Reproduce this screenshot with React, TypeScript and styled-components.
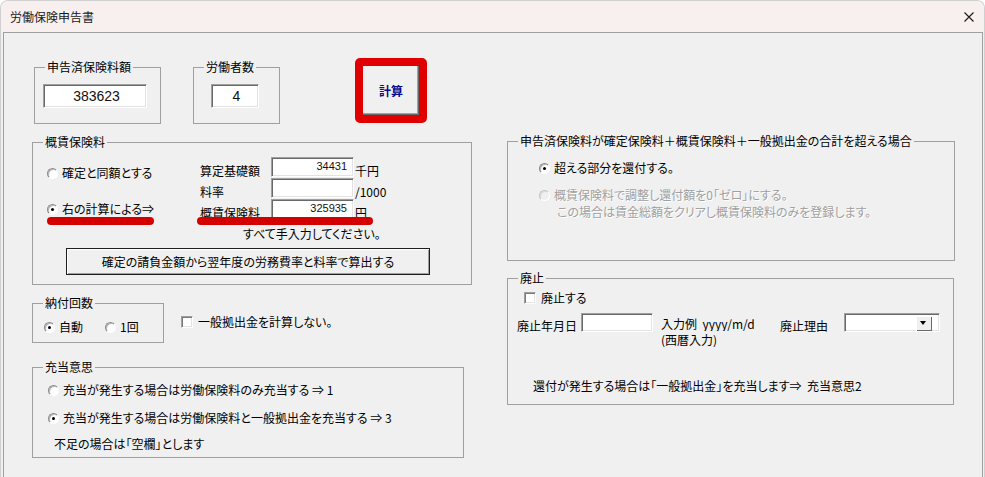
import type { ReactNode } from 'react'
import styled, { createGlobalStyle } from 'styled-components'

const ui = `"Noto Sans CJK JP", "Noto Sans", sans-serif`

const Option = ({ checked, disabled, children }: { checked?: boolean; disabled?: boolean; children: ReactNode }) => (
   <OptionRow $disabled={disabled}>
      <RadioMark $checked={checked} $disabled={disabled} />
      <span>{children}</span>
   </OptionRow>
)

const Check = ({ children }: { children: ReactNode }) => (
   <CheckRow>
      <CheckMark />
      <span>{children}</span>
   </CheckRow>
)

const App = () => {
   return (
      <>
         <GlobalStyle />
         <Window>
            <TitleBar>
               <Title>労働保険申告書</Title>
               <svg width='10' height='10' viewBox='0 0 10 10'>
                  <path d='M0.5 0.5 L9.5 9.5 M9.5 0.5 L0.5 9.5' stroke='#1a1a1a' strokeWidth='1.1' />
               </svg>
            </TitleBar>

            <Client>
               <TopRow>
                  <Frame $w={127} $h={64} $mt={2}>
                     <Legend>申告済保険料額</Legend>
                     <TextBox $w={104} $h={24} $big $mt={10} $ml={8}>383623</TextBox>
                  </Frame>
                  <Frame $w={87} $h={64} $mt={2} $ml={32}>
                     <Legend>労働者数</Legend>
                     <TextBox $w={48} $h={24} $big $mt={10} $ml={17}>4</TextBox>
                  </Frame>
                  <CalcMark>
                     <CalcButton>計算</CalcButton>
                  </CalcMark>
               </TopRow>

               <Columns>
                  <Column>
                     <Frame $w={440} $h={150} $mt={1}>
                        <Legend>概賃保険料</Legend>
                        <EstimateBody>
                           <RadioStack $left={14} $top={17} $gap={22}>
                              <Option>確定と同額とする</Option>
                              <Option checked>右の計算による⇒</Option>
                           </RadioStack>
                           <FieldGrid>
                              <FieldLabel>算定基礎額</FieldLabel>
                              <TextBox $w={83} $h={20}>34431</TextBox>
                              <FieldLabel $unit>千円</FieldLabel>
                              <FieldLabel>料率</FieldLabel>
                              <TextBox $w={83} $h={20} />
                              <FieldLabel $unit>/1000</FieldLabel>
                              <FieldLabel>概賃保険料</FieldLabel>
                              <TextBox $w={83} $h={20}>325935</TextBox>
                              <FieldLabel $unit>円</FieldLabel>
                           </FieldGrid>
                           <Highlight $left={14} $width={107} />
                           <Highlight $left={164} $width={176} />
                        </EstimateBody>
                        <Note $ml={210} $mt={7}>すべて手入力してください。</Note>
                        <WideButton>確定の請負金額から翌年度の労務費率と料率で算出する</WideButton>
                     </Frame>

                     <PayRow>
                        <Frame $w={132} $h={47}>
                           <Legend>納付回数</Legend>
                           <InlineOptions>
                              <Option checked>自動</Option>
                              <Option>1回</Option>
                           </InlineOptions>
                        </Frame>
                        <CheckSlot>
                           <Check>一般拠出金を計算しない。</Check>
                        </CheckSlot>
                     </PayRow>

                     <Frame $w={432} $h={98} $mt={17}>
                        <Legend>充当意思</Legend>
                        <RadioStack $left={15} $top={9} $gap={14}>
                           <Option>充当が発生する場合は労働保険料のみ充当する ⇒ 1</Option>
                           <Option checked>充当が発生する場合は労働保険料と一般拠出金を充当する ⇒ 3</Option>
                        </RadioStack>
                        <Note $ml={21} $mt={12}>不足の場合は「空欄」とします</Note>
                     </Frame>
                  </Column>

                  <Column>
                     <Frame $w={448} $h={127}>
                        <Legend>申告済保険料が確定保険料＋概賃保険料＋一般拠出金の合計を超える場合</Legend>
                        <RadioStack $left={31} $top={13} $gap={13}>
                           <Option checked>超える部分を還付する。</Option>
                           <Option disabled>概賃保険料で調整し還付額を0「ゼロ」にする。</Option>
                        </RadioStack>
                        <Note $ml={49} $mt={3} $disabled>この場合は賃金総額をクリアし概賃保険料のみを登録します。</Note>
                     </Frame>

                     <Frame $w={447} $h={134} $mt={10}>
                        <Legend>廃止</Legend>
                        <AbolishCheck>
                           <Check>廃止する</Check>
                        </AbolishCheck>
                        <DateRow>
                           <RowLabel>廃止年月日</RowLabel>
                           <TextBox $w={72} $h={19} />
                           <Example>
                              <ExampleLine>入力例&nbsp;&nbsp;yyyy/m/d</ExampleLine>
                              <ExampleLine>(西暦入力)</ExampleLine>
                           </Example>
                           <RowLabel>廃止理由</RowLabel>
                           <TextBox $w={96} $h={19} $combo>
                              <DropButton />
                           </TextBox>
                        </DateRow>
                        <Note $ml={25} $mt={32}>還付が発生する場合は「一般拠出金」を充当します⇒&nbsp;&nbsp;充当意思2</Note>
                     </Frame>
                  </Column>
               </Columns>
            </Client>
         </Window>
      </>
   )
}

const GlobalStyle = createGlobalStyle`
   html, body {
      margin: 0;
      background: #ffffff;
   }

   body {
      font-family: ${ui};
      font-size: 12px;
      font-feature-settings: 'palt';
      color: #000;
   }
`

const Window = styled.div`
   width: 985px;
   height: 477px;
   box-sizing: border-box;
   border: 1px solid #cfcfcf;
   border-bottom: none;
   border-radius: 8px 8px 0 0;
   background: #f0f0f0;
   overflow: hidden;
   display: flex;
   flex-direction: column;
`

const TitleBar = styled.header`
   height: 31px;
   flex-shrink: 0;
   display: flex;
   align-items: center;
   justify-content: space-between;
   padding: 0 10px 0 9px;
   background: #f8f0ef;
`

const Title = styled.span`
   font-size: 12px;
   line-height: 14px;
   color: #1a1a1a;
`

const Client = styled.main`
   flex: 1;
   margin: 0 1px 0 2px;
   border: 1px solid #a0a0a0;
   border-bottom: none;
   background: #f0f0f0;
`

const TopRow = styled.section`
   display: flex;
   align-items: flex-start;
   padding: 25px 0 0 30px;
`

const Frame = styled.fieldset<{ $w: number; $h: number; $mt?: number; $ml?: number }>`
   box-sizing: border-box;
   width: ${p => p.$w}px;
   height: ${p => p.$h}px;
   min-width: 0;
   margin: ${p => p.$mt ?? 0}px 0 0 ${p => p.$ml ?? 0}px;
   padding: 0;
   border: 1px solid #a0a0a0;
`

const Legend = styled.legend`
   margin-left: 10px;
   padding: 0 2px;
   height: 14px;
   line-height: 14px;
   font-size: 12px;
   white-space: nowrap;
`

const TextBox = styled.div<{
   $w: number
   $h: number
   $big?: boolean
   $combo?: boolean
   $mt?: number
   $ml?: number
}>`
   box-sizing: border-box;
   width: ${p => p.$w}px;
   height: ${p => p.$h}px;
   margin: ${p => p.$mt ?? 0}px 0 0 ${p => p.$ml ?? 0}px;
   background: #ffffff;
   border-top: 1px solid #a0a0a0;
   border-left: 1px solid #a0a0a0;
   border-right: 1px solid #ffffff;
   border-bottom: 1px solid #ffffff;
   box-shadow: inset 1px 1px 0 #696969, inset -1px -1px 0 #e3e3e3;
   font-family: 'Liberation Sans', Arial, sans-serif;
   font-size: ${p => (p.$big ? 14 : 11)}px;
   line-height: ${p => (p.$big ? p.$h - 2 : 14)}px;
   text-align: ${p => (p.$big ? 'center' : 'right')};
   padding: ${p => (p.$big ? '0 0 0 3px' : '1px 6px 0 0')};
   color: #111;
   display: ${p => (p.$combo ? 'flex' : 'block')};
   justify-content: flex-end;
   align-items: center;
`

const DropButton = styled.span`
   position: relative;
   box-sizing: border-box;
   width: 16px;
   height: 15px;
   margin-right: 1px;
   background: #f0f0f0;
   box-shadow: inset 1px 1px 0 #ffffff, inset -1px -1px 0 #696969;

   &::after {
      content: '';
      position: absolute;
      left: 4px;
      top: 5px;
      border-left: 3.5px solid transparent;
      border-right: 3.5px solid transparent;
      border-top: 4px solid #000;
   }
`

const CalcMark = styled.div`
   box-sizing: border-box;
   width: 72px;
   height: 65px;
   margin-left: 75px;
   border: 8px solid #e10000;
   border-radius: 5px;
`

const CalcButton = styled.button`
   width: 100%;
   height: 100%;
   padding: 0;
   border: none;
   background: #f0f0f0;
   box-shadow: inset -1px -1px 0 #696969, inset -2px -2px 0 #a0a0a0;
   font-family: ${ui};
   font-size: 12px;
   font-weight: 700;
   color: #0a0a8c;
`

const Columns = styled.section`
   display: grid;
   grid-template-columns: 440px 448px;
   column-gap: 35px;
   align-items: start;
   padding-left: 28px;
   margin-top: 10px;
`

const Column = styled.div`
   display: flex;
   flex-direction: column;
`

const EstimateBody = styled.div`
   position: relative;
   display: grid;
   grid-template-columns: 167px auto;
`

const RadioStack = styled.div<{ $left: number; $top: number; $gap: number }>`
   display: flex;
   flex-direction: column;
   gap: ${p => p.$gap}px;
   padding: ${p => p.$top}px 0 0 ${p => p.$left}px;
`

const OptionRow = styled.div<{ $disabled?: boolean }>`
   display: flex;
   align-items: center;
   gap: 4px;
   height: 14px;
   line-height: 14px;
   white-space: nowrap;
   color: ${p => (p.$disabled ? '#a0a0a0' : '#000')};
   text-shadow: ${p => (p.$disabled ? '1px 1px 0 #ffffff' : 'none')};
`

const RadioMark = styled.span<{ $checked?: boolean; $disabled?: boolean }>`
   position: relative;
   flex-shrink: 0;
   box-sizing: border-box;
   width: 11px;
   height: 11px;
   border-radius: 50%;
   border: 1px solid;
   border-color: ${p => (p.$disabled ? '#c4c4c4 #fff #fff #c4c4c4' : '#8a8a8a #fff #fff #8a8a8a')};
   background: ${p => (p.$disabled ? '#f0f0f0' : '#ffffff')};
   box-shadow: inset 1px 1px 0 ${p => (p.$disabled ? '#dadada' : '#b4b4b4')};

   &::after {
      content: '';
      display: ${p => (p.$checked ? 'block' : 'none')};
      position: absolute;
      left: 3px;
      top: 3px;
      width: 3px;
      height: 3px;
      border-radius: 50%;
      background: #000;
   }
`

const CheckRow = styled.div`
   display: flex;
   align-items: center;
   gap: 5px;
   height: 14px;
   line-height: 14px;
   white-space: nowrap;
`

const CheckMark = styled.span`
   flex-shrink: 0;
   box-sizing: border-box;
   width: 12px;
   height: 12px;
   background: #ffffff;
   border-top: 1px solid #a0a0a0;
   border-left: 1px solid #a0a0a0;
   border-right: 1px solid #ffffff;
   border-bottom: 1px solid #ffffff;
   box-shadow: inset 1px 1px 0 #7a7a7a, inset -1px -1px 0 #e3e3e3;
`

const FieldGrid = styled.div`
   display: grid;
   grid-template-columns: 71px 83px auto;
   grid-auto-rows: 21px;
   padding-top: 8px;
`

const FieldLabel = styled.span<{ $unit?: boolean }>`
   margin: 7px 0 0 ${p => (p.$unit ? 1 : 0)}px;
   line-height: 14px;
   white-space: nowrap;
`

const Highlight = styled.span<{ $left: number; $width: number }>`
   position: absolute;
   left: ${p => p.$left}px;
   top: 68px;
   width: ${p => p.$width}px;
   height: 8px;
   border-radius: 4px;
   background: #d40000;
`

const Note = styled.div<{ $ml: number; $mt: number; $disabled?: boolean }>`
   margin: ${p => p.$mt}px 0 0 ${p => p.$ml}px;
   line-height: 14px;
   white-space: nowrap;
   color: ${p => (p.$disabled ? '#a0a0a0' : '#000')};
   text-shadow: ${p => (p.$disabled ? '1px 1px 0 #ffffff' : 'none')};
`

const WideButton = styled.button`
   display: block;
   box-sizing: border-box;
   width: 364px;
   height: 27px;
   margin: 7px 0 0 33px;
   padding: 0;
   border: 1px solid #1e1e1e;
   background: #f0f0f0;
   box-shadow: inset 1px 1px 0 #ffffff, inset -1px -1px 0 #a0a0a0;
   font-family: ${ui};
   font-size: 12px;
   font-feature-settings: 'palt';
   color: #000;
`

const PayRow = styled.div`
   display: flex;
   align-items: flex-start;
   margin-top: 11px;
`

const InlineOptions = styled.div`
   display: flex;
   gap: 22px;
   padding: 10px 0 0 11px;
`

const CheckSlot = styled.div`
   margin: 19px 0 0 17px;
`

const AbolishCheck = styled.div`
   margin: 6px 0 0 16px;
`

const DateRow = styled.div`
   display: flex;
   align-items: flex-start;
   margin: 8px 0 0 9px;
`

const RowLabel = styled.span`
   width: 64px;
   margin-top: 6px;
   line-height: 14px;
   white-space: nowrap;
`

const Example = styled.div`
   display: flex;
   flex-direction: column;
   gap: 1px;
   width: 119px;
   margin: 3px 0 0 8px;
   white-space: nowrap;
`

const ExampleLine = styled.span`
   display: block;
   height: 15px;
   line-height: 15px;
   overflow: hidden;
`

export default App
